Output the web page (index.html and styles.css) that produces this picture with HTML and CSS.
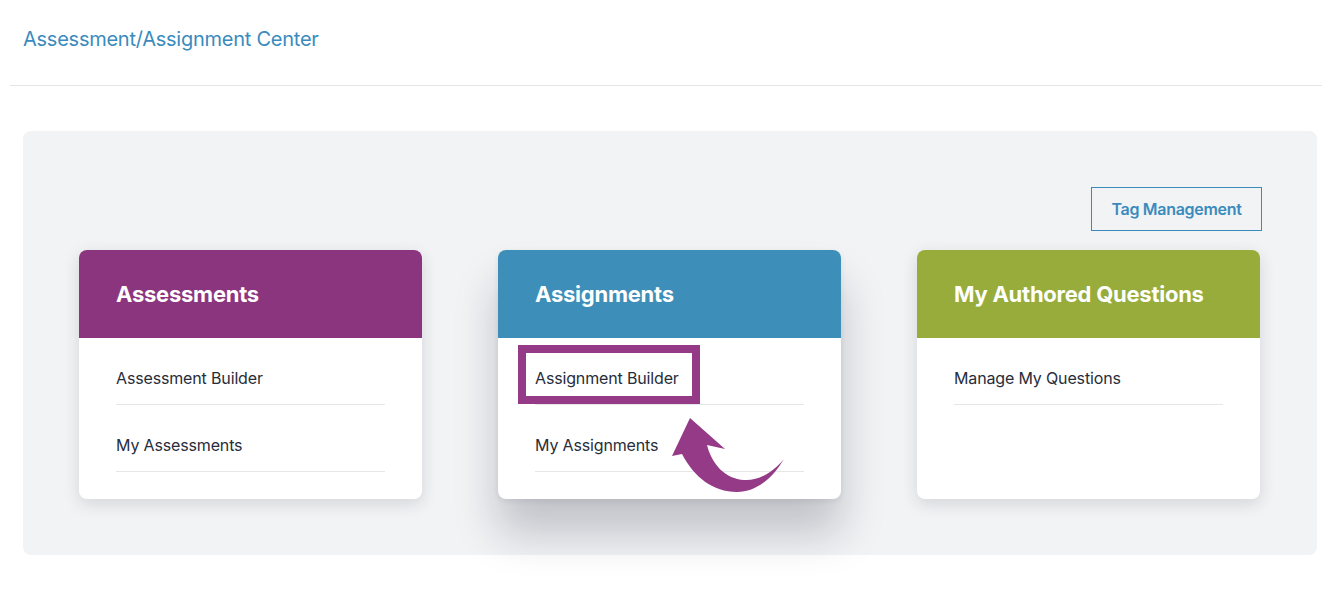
FILE: index.html
```html
<!DOCTYPE html>
<html lang="en">
<head>
<meta charset="utf-8">
<title>Assessment/Assignment Center</title>
<link rel="stylesheet" href="styles.css">
</head>
<body>
  <header class="page-header">
    <h1 class="page-title">Assessment/Assignment Center</h1>
  </header>
  <hr class="divider">
  <main class="panel">
    <div class="toolbar">
      <button class="tag-btn">Tag Management</button>
    </div>
    <div class="cards">
      <section class="card">
        <div class="card-head purple">Assessments</div>
        <ul class="card-list">
          <li>Assessment Builder</li>
          <li>My Assessments</li>
        </ul>
      </section>
      <section class="card card-active">
        <div class="card-head blue">Assignments</div>
        <ul class="card-list">
          <li>Assignment Builder</li>
          <li>My Assignments</li>
        </ul>
        <div class="highlight"></div>
        <svg class="arrow" width="120" height="82" viewBox="0 0 120 82">
          <path d="M22 3 L57 34 L39 30 C44 50 58 64 76 65 C92 66 106 56 116 44 C104 64 88 77 69 77 C45 77 26 62 14 39 L4 41 Z" fill="#943a87"/>
        </svg>
      </section>
      <section class="card">
        <div class="card-head green">My Authored Questions</div>
        <ul class="card-list">
          <li>Manage My Questions</li>
        </ul>
      </section>
    </div>
  </main>
</body>
</html>
```
FILE: styles.css
```css
* { box-sizing: border-box; }
html, body { margin: 0; padding: 0; background: #ffffff; }
body {
  font-family: Inter, "Noto Sans", "Liberation Sans", sans-serif;
  color: #272d3a;
  width: 1340px;
  height: 596px;
  overflow: hidden;
}
.page-header { padding: 27px 23px 0 23px; height: 85px; }
.page-title {
  margin: 0;
  font-size: 20px;
  font-weight: 400;
  line-height: 24px;
  color: #3a8bbd;
  letter-spacing: -0.25px;
}
.divider {
  margin: 0 18px 0 10px;
  border: 0;
  border-top: 1px solid #e3e4e8;
  height: 0;
}
.panel {
  margin: 45px 23px 0 23px;
  height: 424px;
  background: #f2f3f5;
  border-radius: 8px;
  padding: 56px 56px 0 56px;
}
.toolbar { display: flex; justify-content: flex-end; }
.tag-btn {
  height: 44px;
  width: 171px;
  border: 1px solid #3a8bbd;
  background: transparent;
  color: #3a8bbd;
  font-family: inherit;
  font-size: 16px;
  font-weight: 600;
  letter-spacing: -0.3px;
  padding: 0;
  margin-right: -1px;
}
.cards {
  margin-top: 19px;
  display: flex;
  gap: 76px;
}
.card {
  position: relative;
  width: 343px;
  height: 249px;
  background: #ffffff;
  border-radius: 8px;
  box-shadow: 0 5px 16px rgba(30, 35, 50, 0.14);
}
.card-active {
  box-shadow: 0 34px 44px rgba(20, 25, 40, 0.22), 0 2px 6px rgba(20, 25, 40, 0.08);
}
.card-head {
  height: 88px;
  border-radius: 8px 8px 0 0;
  padding-left: 37px;
  display: flex;
  align-items: center;
  color: #ffffff;
  font-size: 22px;
  font-weight: 700;
  letter-spacing: -0.25px;
}
.purple { background: #8b357e; }
.blue { background: #3d8eb8; }
.green { background: #97ac3b; }
.card-list {
  list-style: none;
  margin: 0;
  padding: 0 37px;
}
.card-list li {
  padding: 30px 0 16px 0;
  line-height: 20px;
  font-size: 16px;
  letter-spacing: -0.15px;
  border-bottom: 1px solid #e4e6ea;
}
.highlight {
  position: absolute;
  left: 20px;
  top: 95px;
  width: 182px;
  height: 59px;
  border: 8px solid #943a87;
}
.arrow {
  position: absolute;
  left: 170px;
  top: 165px;
}
```
